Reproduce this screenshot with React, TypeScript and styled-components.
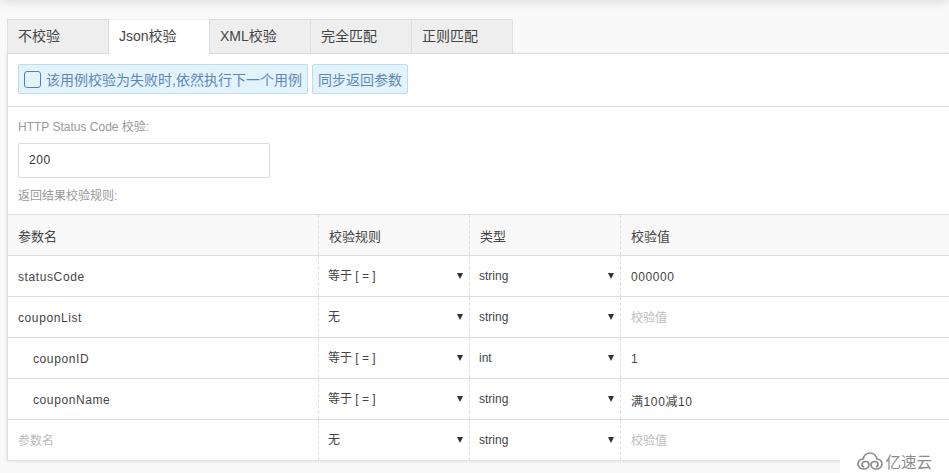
import React, { FC } from "react";
import styled, { createGlobalStyle } from "styled-components";

type Rule = {
  name: string;
  indent?: boolean;
  rule: string;
  type: string;
  value: string;
};

const tabs = ["不校验", "Json校验", "XML校验", "完全匹配", "正则匹配"];

const ruleOptions = ["等于 [ = ]", "无"];
const typeOptions = ["string", "int"];

const rules: Rule[] = [
  { name: "statusCode", rule: "等于 [ = ]", type: "string", value: "000000" },
  { name: "couponList", rule: "无", type: "string", value: "" },
  { name: "couponID", indent: true, rule: "等于 [ = ]", type: "int", value: "1" },
  { name: "couponName", indent: true, rule: "等于 [ = ]", type: "string", value: "满100减10" },
  { name: "", rule: "无", type: "string", value: "" },
];

const GlobalStyle = createGlobalStyle`
  html, body {
    margin: 0;
    height: 473px;
    overflow: hidden;
    background: #f9f9f9;
  }
  body, input, select {
    font-family: "Liberation Sans", "Noto Sans CJK SC", sans-serif;
  }
`;

const Page = styled.div`
  position: relative;
  height: 473px;
  padding: 19px 0 0 7px;
  box-sizing: border-box;
  overflow: hidden;

  &::before {
    content: "";
    position: absolute;
    top: -10px;
    left: 0;
    right: 0;
    height: 10px;
    box-shadow: 0 2px 10px rgba(0, 0, 0, 0.12);
  }
`;

const TabBar = styled.div`
  display: flex;
  height: 35px;
  box-sizing: border-box;
`;

const Tab = styled.div<{ $active?: boolean }>`
  width: 101px;
  box-sizing: border-box;
  padding: 8px 0 0 10px;
  font-size: 14px;
  line-height: 17px;
  color: #444;
  background: ${(p) => (p.$active ? "#fff" : "#eee")};
  border: 1px solid #ddd;
  border-width: 1px 1px ${(p) => (p.$active ? "0" : "1px")} 0;
  border-top-color: ${(p) => (p.$active ? "#f4f4f4" : "#ddd")};

  &:first-child {
    width: 102px;
    border-left: 1px solid #ddd;
  }
  &:last-child {
    border-radius: 0 2px 0 0;
  }
`;

const Panel = styled.div`
  margin-top: -1px;
  background: #fff;
  border-left: 1px solid #ddd;
  border-top: 1px solid #ddd;
  box-shadow: 0 1px 3px rgba(0, 0, 0, 0.15);
`;

const OptionBar = styled.div`
  display: flex;
  gap: 4px;
  height: 53px;
  box-sizing: border-box;
  padding: 10px 0 0 10px;
  border-bottom: 1px solid #ddd;
`;

const Notice = styled.label`
  display: flex;
  align-items: center;
  gap: 5px;
  height: 30px;
  box-sizing: border-box;
  padding: 0 5px;
  font-size: 14px;
  color: #5f86b8;
  background: #e3f3fc;
  border: 1px solid #bcdcf0;
  border-radius: 2px;
`;

const CheckBox = styled.span`
  width: 15px;
  height: 15px;
  border: 1px solid #4f81ae;
  border-radius: 3px;
`;

const FieldLabel = styled.div`
  font-size: 12px;
  line-height: 14px;
  color: #999;
  padding-left: 10px;
`;

const StatusForm = styled.div`
  display: flex;
  flex-direction: column;
  padding-top: 13px;
`;

const StatusInput = styled.input`
  width: 252px;
  height: 35px;
  box-sizing: border-box;
  margin: 9px 0 11px 10px;
  padding: 0 10px 2px;
  font-size: 12px;
  letter-spacing: 0.6px;
  color: #333;
  border: 1px solid #ddd;
  border-radius: 2px;
  outline: none;
`;

const Table = styled.div`
  margin-top: 11px;
  border-top: 1px solid #ddd;
`;

const Row = styled.div<{ $head?: boolean }>`
  display: grid;
  grid-template-columns: 310px 151px 151px 1fr;
  height: 41px;
  box-sizing: border-box;
  border-bottom: 1px solid #ddd;
  background: ${(p) => (p.$head ? "#f8f8f8" : "#fff")};

  &:last-child {
    border-bottom: 0;
    height: 40px;
  }
`;

const Cell = styled.div`
  position: relative;
  display: flex;
  align-items: center;
  min-width: 0;
  border-left: 1px dashed #ddd;

  &:first-child {
    border-left: 0;
  }
`;

const HeadText = styled.span`
  padding-left: 10px;
  font-size: 13px;
  color: #444;
`;

const CellInput = styled.input<{ $indent?: boolean }>`
  width: 100%;
  height: 100%;
  box-sizing: border-box;
  padding: 2px 10px 0 ${(p) => (p.$indent ? "25px" : "10px")};
  border: 0;
  outline: none;
  background: transparent;
  font-size: 12px;
  letter-spacing: 0.6px;
  color: #444;

  &::placeholder {
    color: #bbb;
    opacity: 1;
    letter-spacing: 0;
  }
`;

const Select = styled.select`
  width: 100%;
  height: 100%;
  padding: 0 0 0 9px;
  border: 0;
  outline: none;
  appearance: none;
  background: transparent;
  font-size: 12px;
  color: #444;
`;

const Caret = styled.span`
  position: absolute;
  right: 6px;
  top: 17px;
  border-style: solid;
  border-width: 6px 3px 0;
  border-color: #333 transparent transparent;
  pointer-events: none;
`;

const Watermark = styled.div`
  position: absolute;
  right: 0;
  bottom: 0;
  display: flex;
  align-items: center;
  justify-content: flex-end;
  gap: 2px;
  width: 109px;
  height: 21px;
  box-sizing: border-box;
  padding: 0 17px 4px 0;
  font-size: 15.5px;
  color: #8b8b8b;
  background: linear-gradient(to bottom, rgba(255, 255, 255, 0) 0, rgba(255, 255, 255, 0) 8px, #fff 8px);
`;

const LogoMark: FC = () => (
  <svg width="26" height="18" viewBox="0 0 26 18" fill="none" stroke="#8b8b8b" strokeWidth="1.7">
    <path d="M7 17C3.500 17 1 14.800 1 12C1 9.200 3.300 7 6 7C7 3.500 9.800 1 13 1C16.200 1 19 3.500 20 7C22.700 7 25 9.200 25 12C25 14.800 22.500 17 19 17C16 17 14 15 14 12.500C14 10.500 15.500 9.500 17.500 9.500C19.500 9.500 21 10.800 21 12.500C21 14 20 14.800 18.800 14.800" />
    <path d="M7 17C10 17 12 15 12 12.500C12 10.500 10.500 9.500 8.500 9.500C6.500 9.500 5 10.800 5 12.500C5 14 6 14.800 7.200 14.800" />
  </svg>
);

const App: FC = () => (
  <Page>
    <GlobalStyle />
    <TabBar>
      {tabs.map((tab, i) => (
        <Tab key={tab} $active={i === 1}>
          {tab}
        </Tab>
      ))}
    </TabBar>
    <Panel>
      <OptionBar>
        <Notice>
          <CheckBox />
          该用例校验为失败时,依然执行下一个用例
        </Notice>
        <Notice>同步返回参数</Notice>
      </OptionBar>
      <StatusForm>
        <FieldLabel>HTTP Status Code 校验:</FieldLabel>
        <StatusInput defaultValue="200" />
        <FieldLabel>返回结果校验规则:</FieldLabel>
      </StatusForm>
      <Table>
        <Row $head>
          <Cell>
            <HeadText>参数名</HeadText>
          </Cell>
          <Cell>
            <HeadText>校验规则</HeadText>
          </Cell>
          <Cell>
            <HeadText>类型</HeadText>
          </Cell>
          <Cell>
            <HeadText>校验值</HeadText>
          </Cell>
        </Row>
        {rules.map((row, i) => (
          <Row key={i}>
            <Cell>
              <CellInput $indent={row.indent} defaultValue={row.name} placeholder="参数名" />
            </Cell>
            <Cell>
              <Select defaultValue={row.rule}>
                {ruleOptions.map((o) => (
                  <option key={o}>{o}</option>
                ))}
              </Select>
              <Caret />
            </Cell>
            <Cell>
              <Select defaultValue={row.type}>
                {typeOptions.map((o) => (
                  <option key={o}>{o}</option>
                ))}
              </Select>
              <Caret />
            </Cell>
            <Cell>
              <CellInput defaultValue={row.value} placeholder="校验值" />
            </Cell>
          </Row>
        ))}
      </Table>
    </Panel>
    <Watermark>
      <LogoMark />
      亿速云
    </Watermark>
  </Page>
);

export default App;
